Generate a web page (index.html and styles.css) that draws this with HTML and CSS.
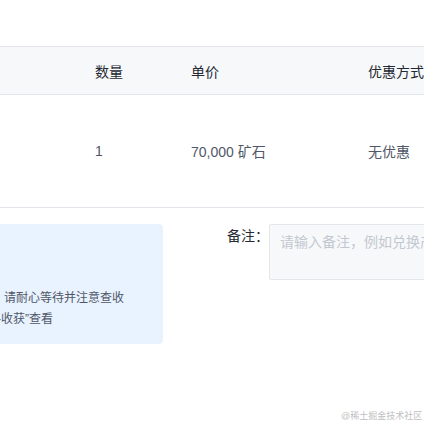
FILE: index.html
```html
<!DOCTYPE html>
<html lang="zh">
<head>
<meta charset="utf-8">
<link rel="stylesheet" href="styles.css">
</head>
<body>
<div class="page">
  <div class="table">
    <div class="thead">
      <div class="c c1"></div>
      <div class="c c2">数量</div>
      <div class="c c3">单价</div>
      <div class="c c4">优惠方式</div>
    </div>
    <div class="trow">
      <div class="c c1"></div>
      <div class="c c2">1</div>
      <div class="c c3">70,000 矿石</div>
      <div class="c c4">无优惠</div>
    </div>
  </div>
  <div class="bottom">
    <div class="notice">
      <div class="line l1">兑换成功后将在工作日内发货，请耐心等待并注意查收</div>
      <div class="line l2">可在“我的-收获”查看</div>
    </div>
    <div class="remark">
      <span class="label">备注：</span>
      <textarea class="input" placeholder="请输入备注，例如兑换产品的颜色、尺码等"></textarea>
    </div>
  </div>
</div>
<div class="wm">@稀土掘金技术社区</div>
</body>
</html>
```
FILE: styles.css
```css
html, body {
  margin: 0;
  padding: 0;
  background: #fff;
  overflow: hidden;
  width: 424px;
  height: 424px;
}
body {
  font-family: "Liberation Sans", "Noto Sans CJK SC", sans-serif;
  color: #515767;
  position: relative;
}
.page {
  padding-top: 46px;
  width: 700px;
}
.table {
  width: 700px;
}
.thead, .trow {
  display: grid;
  grid-template-columns: 95px 96px 177px 1fr;
  align-items: center;
  font-size: 14px;
}
.thead {
  height: 47px;
  background: #f7f8fa;
  border-top: 1px solid #e4e6eb;
  border-bottom: 1px solid #e4e6eb;
  color: #252933;
}
.trow {
  height: 112px;
  border-bottom: 1px solid #e4e6eb;
  color: #515767;
}
.c {
  white-space: nowrap;
}
.bottom {
  display: flex;
  align-items: flex-start;
  padding-top: 16px;
}
.notice {
  box-sizing: border-box;
  width: 363px;
  height: 120px;
  margin-left: -200px;
  background: #e8f3ff;
  border-radius: 4px;
  padding: 64px 16px 0 16px;
  font-size: 12px;
  line-height: 21px;
  color: #515767;
  overflow: hidden;
}
.line {
  white-space: nowrap;
}
.l1 {
  margin-left: 20px;
}
.l2 {
  margin-left: 129px;
}
.remark {
  display: flex;
  align-items: flex-start;
  margin-left: 64px;
}
.label {
  font-size: 14px;
  color: #252933;
  line-height: 22px;
  margin-top: 1px;
  width: 42px;
}
.input {
  box-sizing: border-box;
  width: 300px;
  height: 56px;
  background: #f7f8fa;
  border: 1px solid #e4e6eb;
  border-radius: 2px;
  padding: 6px 10px;
  font-family: "Liberation Sans", "Noto Sans CJK SC", sans-serif;
  font-size: 14px;
  resize: none;
  outline: none;
}
.input::placeholder {
  color: #c2c8d1;
}
.wm {
  position: absolute;
  left: 341px;
  top: 409px;
  font-size: 9px;
  color: #c0c0c0;
  white-space: nowrap;
}
```
